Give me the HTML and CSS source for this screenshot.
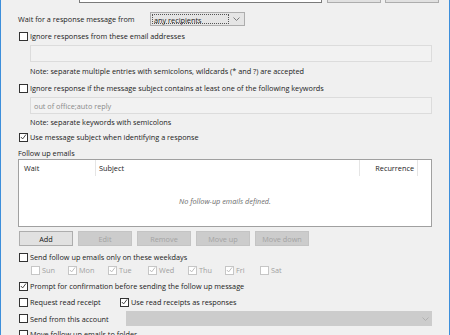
FILE: index.html
```html
<!DOCTYPE html>
<html lang="en">

<head>
    <meta charset="UTF-8">
    <title>Follow up settings</title>
    <link rel="stylesheet" href="styles.css">
</head>

<body>

    <div class="dialog">
        <div class="top-strip">
            <span class="top-input"></span>
            <span class="btn top-btn"></span>
            <span class="btn top-btn"></span>
        </div>

        <div class="row wait-row">
            <span class="wait-label">Wait for a response message from</span>
            <div class="select">
                <span class="select-text">any recipients</span>
                <svg class="chev" width="7" height="4" viewBox="0 0 7 4"><path d="M0.5 0.5 L3.5 3.5 L6.5 0.5" fill="none" stroke="#7a7a7a" stroke-width="1" /></svg>
            </div>
        </div>

        <label class="row check-row r-ignore-addr"><span class="box"></span>Ignore responses from these email addresses</label>
        <div class="field indent"></div>
        <div class="row note indent n1">Note: separate multiple entries with semicolons, wildcards (* and ?) are accepted</div>

        <label class="row check-row r-ignore-subj"><span class="box"></span>Ignore response if the message subject contains at least one of the following keywords</label>
        <div class="field indent"><span class="field-text">out of office;auto reply</span></div>
        <div class="row note indent n2">Note: separate keywords with semicolons</div>

        <label class="row check-row r-use-subj"><span class="box checked"><svg width="8" height="8" viewBox="0 0 8 8"><path d="M1 4 L3 6.2 L7 1" fill="none" stroke="#333" stroke-width="1" /></svg></span>Use message subject when identifying a response</label>

        <div class="row section-label">Follow up emails</div>

        <div class="list">
            <div class="list-head">
                <span class="col col-wait">Wait</span>
                <span class="col col-subject">Subject</span>
                <span class="col col-rec">Recurrence</span>
            </div>
            <div class="list-empty">No follow-up emails defined.</div>
        </div>

        <div class="buttons">
            <button class="btn">Add</button>
            <button class="btn" disabled>Edit</button>
            <button class="btn" disabled>Remove</button>
            <button class="btn" disabled>Move up</button>
            <button class="btn" disabled>Move down</button>
        </div>

        <label class="row check-row r-weekdays"><span class="box"></span>Send follow up emails only on these weekdays</label>
        <div class="row days">
            <span class="day"><span class="box off"></span>Sun</span>
            <span class="day"><span class="box off"><svg width="8" height="8" viewBox="0 0 8 8"><path d="M1 4 L3 6.2 L7 1" fill="none" stroke="#b5b5b5" stroke-width="1" /></svg></span>Mon</span>
            <span class="day"><span class="box off"><svg width="8" height="8" viewBox="0 0 8 8"><path d="M1 4 L3 6.2 L7 1" fill="none" stroke="#b5b5b5" stroke-width="1" /></svg></span>Tue</span>
            <span class="day"><span class="box off"><svg width="8" height="8" viewBox="0 0 8 8"><path d="M1 4 L3 6.2 L7 1" fill="none" stroke="#b5b5b5" stroke-width="1" /></svg></span>Wed</span>
            <span class="day"><span class="box off"><svg width="8" height="8" viewBox="0 0 8 8"><path d="M1 4 L3 6.2 L7 1" fill="none" stroke="#b5b5b5" stroke-width="1" /></svg></span>Thu</span>
            <span class="day"><span class="box off"><svg width="8" height="8" viewBox="0 0 8 8"><path d="M1 4 L3 6.2 L7 1" fill="none" stroke="#b5b5b5" stroke-width="1" /></svg></span>Fri</span>
            <span class="day"><span class="box off"></span>Sat</span>
        </div>

        <label class="row check-row r-prompt"><span class="box checked"><svg width="8" height="8" viewBox="0 0 8 8"><path d="M1 4 L3 6.2 L7 1" fill="none" stroke="#333" stroke-width="1" /></svg></span>Prompt for confirmation before sending the follow up message</label>

        <div class="row r-receipt">
            <label class="check-row receipt-left"><span class="box"></span>Request read receipt</label>
            <label class="check-row"><span class="box checked"><svg width="8" height="8" viewBox="0 0 8 8"><path d="M1 4 L3 6.2 L7 1" fill="none" stroke="#333" stroke-width="1" /></svg></span>Use read receipts as responses</label>
        </div>

        <div class="row r-account">
            <label class="check-row account-left"><span class="box"></span>Send from this account</label>
            <div class="account-select">
                <svg class="chev" width="7" height="4" viewBox="0 0 7 4"><path d="M0.5 0.5 L3.5 3.5 L6.5 0.5" fill="none" stroke="#b0b0b0" stroke-width="1" /></svg>
            </div>
        </div>

        <label class="row check-row r-move"><span class="box"></span>Move follow up emails to folder</label>
    </div>

</body>

</html>
```

FILE: styles.css
```css
html, body {
    margin: 0;
    padding: 0;
}

body {
    width: 450px;
    height: 335px;
    overflow: hidden;
    background-color: #f0f0f0;
    font-family: "Open Sans", sans-serif;
    font-size: 7.3px;
    color: #1a1a1a;
}

.dialog {
    box-sizing: border-box;
    width: 450px;
    height: 335px;
    border-left: 1px solid #3d8fdb;
    border-right: 1px solid #3d8fdb;
    padding-left: 17px;
    overflow: hidden;
}

.top-strip {
    display: flex;
    align-items: flex-end;
    height: 4px;
    overflow: hidden;
    padding-left: 61px;
}

.top-input {
    box-sizing: border-box;
    width: 243px;
    height: 20px;
    margin-bottom: 1px;
    background: #fff;
    border: 1px solid #7a7a7a;
}

.top-btn {
    width: 55px;
    height: 20px;
    margin-left: 5px;
    margin-bottom: 1px;
}

.top-btn + .top-btn {
    margin-left: 4px;
}

.row {
    display: flex;
    align-items: center;
    height: 12px;
    white-space: nowrap;
}

.check-row {
    display: flex;
    align-items: center;
}

.box {
    box-sizing: border-box;
    display: inline-flex;
    align-items: center;
    justify-content: center;
    width: 9px;
    height: 9px;
    margin-left: 1px;
    margin-right: 2px;
    background: #fff;
    border: 1px solid #333;
    flex-shrink: 0;
}

.box svg {
    display: block;
}

.box.off {
    border-color: #c6c6c6;
}

.wait-row {
    margin-top: 8px;
    height: 14px;
}

.wait-label {
    width: 132px;
}

.select {
    box-sizing: border-box;
    display: flex;
    align-items: center;
    width: 95px;
    height: 14px;
    background: #e5e5e5;
    border: 1px solid #adadad;
    padding: 1px;
}

.select-text {
    box-sizing: border-box;
    flex: 1;
    height: 100%;
    line-height: 10px;
    padding-left: 1px;
    border: 1px dotted #555;
}

.chev {
    margin: 0 3px 0 4px;
}

.r-ignore-addr {
    margin-top: 4px;
}

.indent {
    margin-left: 12px;
}

.field {
    box-sizing: border-box;
    width: 402px;
    height: 17px;
    margin-top: 3px;
    background: #f2f2f2;
    border: 1px solid #dcdcdc;
    display: flex;
    align-items: center;
}

.field-text {
    padding-left: 3px;
    color: #8a8a8a;
}

.n1 {
    margin-top: 3px;
}

.r-ignore-subj {
    margin-top: 5px;
}

.n2 {
    margin-top: 2px;
}

.r-use-subj {
    margin-top: 3px;
}

.section-label {
    margin-top: 4px;
}

.list {
    box-sizing: border-box;
    width: 414px;
    height: 68px;
    background: #fff;
    border: 1px solid #a0a0a0;
}

.list-head {
    display: flex;
    height: 16px;
}

.col {
    box-sizing: border-box;
    display: flex;
    align-items: center;
    border-right: 1px solid #e5e5e5;
}

.col-wait {
    width: 77px;
    padding-left: 5px;
}

.col-subject {
    width: 264px;
    padding-left: 3px;
}

.col-rec {
    width: 58px;
    justify-content: flex-end;
    padding-right: 3px;
}

.list-empty {
    height: 50px;
    display: flex;
    align-items: center;
    justify-content: center;
    font-style: italic;
    color: #6d6d6d;
}

.buttons {
    display: flex;
    gap: 5px;
    margin-top: 4px;
    margin-left: 1px;
}

.btn {
    box-sizing: border-box;
    display: block;
    width: 54px;
    height: 15px;
    padding: 0;
    font-family: inherit;
    font-size: inherit;
    color: #1a1a1a;
    background: #e1e1e1;
    border: 1px solid #adadad;
}

.btn:disabled {
    color: #a3a3a3;
    background: #cccccc;
    border-color: #c4c4c4;
}

.r-weekdays {
    margin-top: 5px;
}

.days {
    display: grid;
    grid-template-columns: 37px 40px 40px 40px 37px 35px auto;
    margin-top: 1px;
    margin-left: 12px;
    color: #a0a0a0;
}

.day {
    display: flex;
    align-items: center;
}

.r-prompt {
    margin-top: 4px;
}

.r-receipt {
    margin-top: 4px;
}

.receipt-left {
    width: 101px;
}

.r-account {
    margin-top: 3px;
    height: 15px;
}

.account-left {
    width: 108px;
}

.account-select {
    box-sizing: border-box;
    width: 306px;
    height: 15px;
    background: #cccccc;
    display: flex;
    align-items: center;
    justify-content: flex-end;
}

.r-move {
    margin-top: 2px;
}
```
